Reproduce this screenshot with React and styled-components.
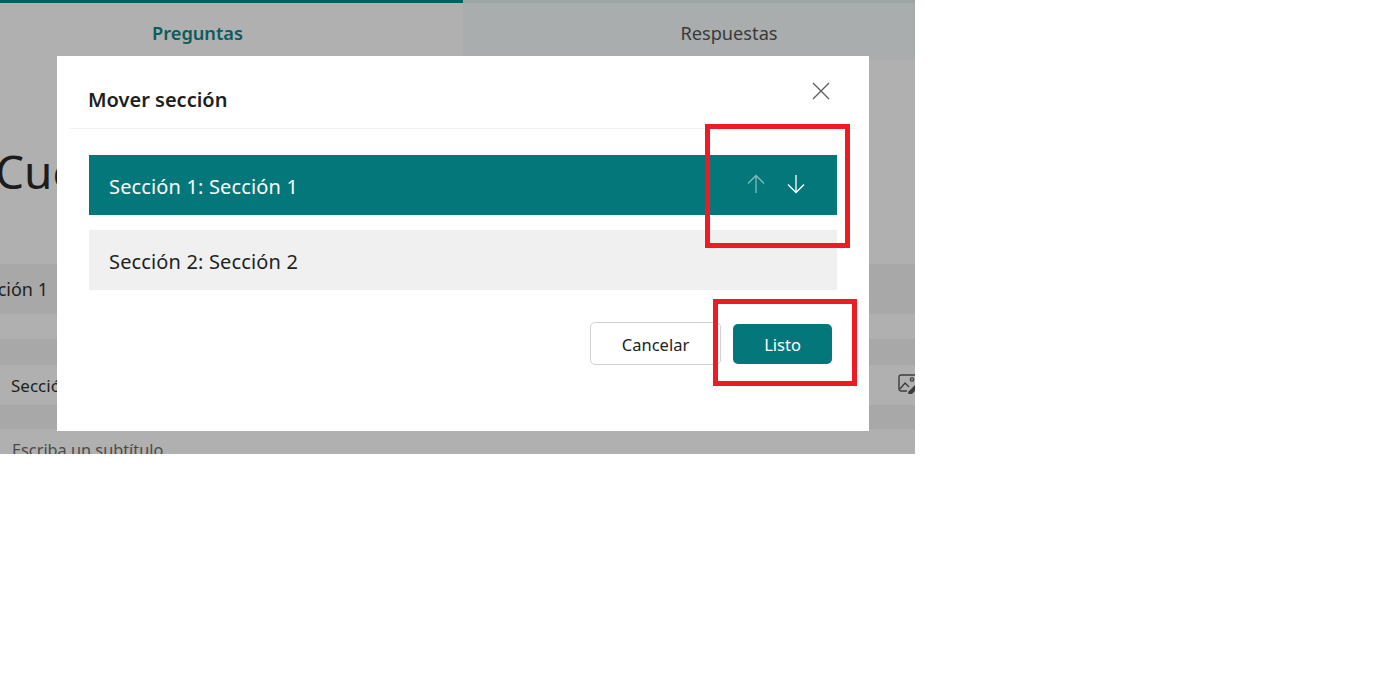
import React from "react";
import styled, { createGlobalStyle } from "styled-components";

const Global = createGlobalStyle`
  html, body {
    margin: 0;
    background: #fff;
  }
  * {
    box-sizing: border-box;
  }
`;

const FONT = `"Noto Sans", "Open Sans", "Liberation Sans", sans-serif`;

// the dimmed form behind the dialog
const Frame = styled.div`
  position: relative;
  width: 915px;
  height: 454px;
  overflow: hidden;
  background: #b0b0b0;
  font-family: ${FONT};
  color: #1f1f1f;
`;

const Tabs = styled.div`
  display: grid;
  grid-template-columns: 463px 1fr;
  height: 60px;
`;

const Tab = styled.div`
  display: flex;
  align-items: center;
  justify-content: center;
  padding: ${(p) => (p.$active ? "3px 68px 0 0" : "3px 0 0 80px")};
  font-size: 18.2px;
  font-weight: ${(p) => (p.$active ? 600 : 400)};
  color: ${(p) => (p.$active ? "#0b5c5c" : "#3a3a3a")};
  background: ${(p) => (p.$active ? "#b0b0b0" : "#a9adad")};
  border-top: 3px solid ${(p) => (p.$active ? "#005e5e" : "#9ca6a6")};
`;

const Title = styled.h1`
  margin: 78px 0 0 -5px;
  height: 106px;
  font-size: 46px;
  line-height: 66px;
  font-weight: 400;
  color: #1c1c1c;
`;

const Band = styled.div`
  display: flex;
  align-items: center;
  justify-content: space-between;
  height: ${(p) => p.$h}px;
  background: ${(p) => (p.$dark ? "#a8a8a8" : "#b0b0b0")};
  font-size: 17px;
`;

const SectionTab = styled.span`
  margin-left: -31px;
  font-size: 18px;
`;

const SectionName = styled.span`
  margin-left: 11px;
  font-size: 17px;
`;

const ImageIcon = styled.svg`
  width: 20px;
  height: 20px;
  margin-right: -3px;
  flex: none;
  transform: translateY(-1px);
`;

const Subtitle = styled.span`
  margin: 16px 0 0 12px;
  font-size: 16.3px;
  color: #4a4a4a;
`;

// dialog and annotations sit on top of the form
const Dialog = styled.div`
  position: absolute;
  left: 57px;
  top: 56px;
  width: 812px;
  height: 375px;
  background: #fff;
  padding: 0 12px;
`;

const Header = styled.div`
  display: flex;
  align-items: center;
  justify-content: space-between;
  height: 73px;
  padding: 15px 27px 0 19px;
  border-bottom: 1px solid #f0f0f0;
`;

const DialogTitle = styled.h2`
  margin: 0;
  font-size: 20px;
  font-weight: 600;
  color: #201f1e;
`;

const CloseButton = styled.button`
  display: flex;
  padding: 0;
  border: 0;
  background: none;
  transform: translateY(-9px);
`;

const SectionList = styled.div`
  display: flex;
  flex-direction: column;
  gap: 15px;
  margin: 26px 20px 0;
`;

const SectionRow = styled.div`
  display: flex;
  align-items: center;
  justify-content: space-between;
  height: 60px;
  padding: 3px 31px 0 20px;
  font-size: 20px;
  letter-spacing: 0.15px;
  background: ${(p) => (p.$selected ? "#04777b" : "#f0f0f0")};
  color: ${(p) => (p.$selected ? "#fff" : "#201f1e")};
`;

const Arrows = styled.div`
  display: flex;
  gap: 20px;
  transform: translateY(-3px);
`;

const Arrow = styled.svg`
  display: block;
  width: 20px;
  height: 20px;
  opacity: ${(p) => (p.$disabled ? 0.5 : 1)};
`;

const Footer = styled.div`
  display: flex;
  justify-content: flex-end;
  align-items: center;
  gap: 12px;
  margin: 32px 25px 0 0;
`;

const Button = styled.button`
  height: ${(p) => (p.$primary ? 40 : 43)}px;
  width: ${(p) => (p.$primary ? 99 : 131)}px;
  padding: 1px 0 0;
  font-family: ${FONT};
  font-size: 16.5px;
  border-radius: 5px;
  border: ${(p) => (p.$primary ? "0" : "1px solid #d2d2d2")};
  background: ${(p) => (p.$primary ? "#04777b" : "#fff")};
  color: ${(p) => (p.$primary ? "#fff" : "#201f1e")};
`;

const Mark = styled.div`
  position: absolute;
  left: ${(p) => p.$x}px;
  top: ${(p) => p.$y}px;
  width: ${(p) => p.$w}px;
  height: ${(p) => p.$h}px;
  border: 5px solid #ed1c24;
`;

const ArrowIcon = ({ up, disabled }) => (
  <Arrow viewBox="0 0 20 20" $disabled={disabled} fill="none" stroke="#fff" strokeWidth="1.3">
    {up ? <path d="M10 19V1.5M2 9.5l8-8 8 8" /> : <path d="M10 1v17.5M2 10.5l8 8 8-8" />}
  </Arrow>
);

export default function App() {
  return (
    <>
      <Global />
      <Frame>
        <Tabs>
          <Tab $active>Preguntas</Tab>
          <Tab>Respuestas</Tab>
        </Tabs>
        <Title>Cuestionario</Title>
        <Band $h={20} />
        <Band $h={50} $dark>
          <SectionTab>Sección 1</SectionTab>
        </Band>
        <Band $h={25} />
        <Band $h={26} $dark />
        <Band $h={40}>
          <SectionName>Sección 1</SectionName>
          <ImageIcon viewBox="0 0 20 20" fill="none" stroke="#3c3c3c" strokeWidth="1.4">
            <path d="M9 17H3a2 2 0 0 1-2-2V3a2 2 0 0 1 2-2h14a2 2 0 0 1 2 2v5" />
            <circle cx="14" cy="5.5" r="1.6" />
            <path d="M2 15l5-6 4 4" />
            <path d="M11 18l7-7 2 2-7 7h-2z" fill="#3c3c3c" />
          </ImageIcon>
        </Band>
        <Band $h={24} $dark />
        <Band $h={25}>
          <Subtitle>Escriba un subtítulo</Subtitle>
        </Band>

        <Dialog>
          <Header>
            <DialogTitle>Mover sección</DialogTitle>
            <CloseButton aria-label="Cerrar">
              <svg width="18" height="18" viewBox="0 0 18 18" fill="none" stroke="#5f5f5f" strokeWidth="1.3">
                <path d="M1 1l16 16M17 1L1 17" />
              </svg>
            </CloseButton>
          </Header>
          <SectionList>
            <SectionRow $selected>
              Sección 1: Sección 1
              <Arrows>
                <ArrowIcon up disabled />
                <ArrowIcon />
              </Arrows>
            </SectionRow>
            <SectionRow>Sección 2: Sección 2</SectionRow>
          </SectionList>
          <Footer>
            <Button>Cancelar</Button>
            <Button $primary>Listo</Button>
          </Footer>
        </Dialog>

        <Mark $x={705} $y={124} $w={145} $h={124} />
        <Mark $x={713} $y={299} $w={144} $h={87} />
      </Frame>
    </>
  );
}
